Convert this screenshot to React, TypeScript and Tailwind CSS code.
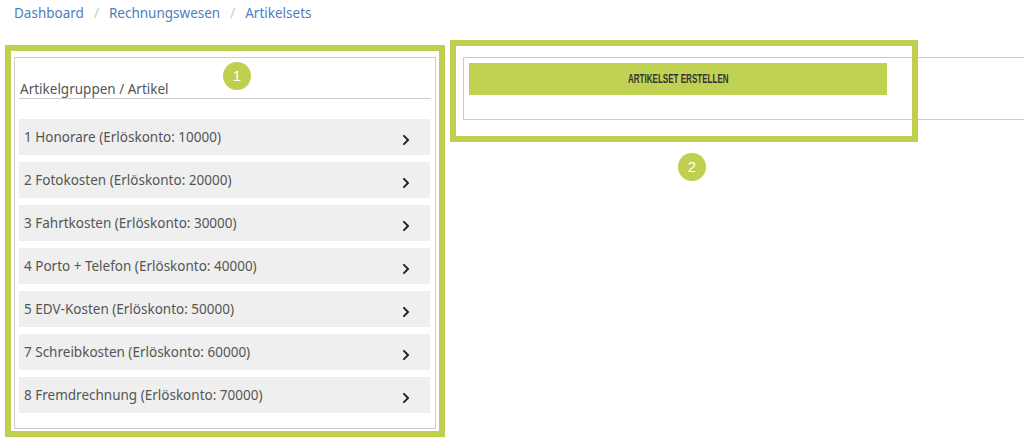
import { FaChevronRight } from 'react-icons/fa';

const groups = [
  '1 Honorare (Erlöskonto: 10000)',
  '2 Fotokosten (Erlöskonto: 20000)',
  '3 Fahrtkosten (Erlöskonto: 30000)',
  '4 Porto + Telefon (Erlöskonto: 40000)',
  '5 EDV-Kosten (Erlöskonto: 50000)',
  '7 Schreibkosten (Erlöskonto: 60000)',
  '8 Fremdrechnung (Erlöskonto: 70000)',
];

function Badge({ n }: { n: string }) {
  return (
    <div className="w-[28px] h-[28px] rounded-full bg-[#c0cf4e] text-white text-[15px] flex items-center justify-center font-['Liberation_Sans',sans-serif]">
      {n}
    </div>
  );
}

export default function App() {
  return (
    <div className="relative w-[1024px] h-[446px] overflow-hidden bg-white font-['Noto_Sans',sans-serif]">
      <nav className="pl-[14px] pt-[2px] h-[24px] flex items-center text-[13.5px] text-[#4f7cbd]">
        <a>Dashboard</a>
        <span className="mx-[10px] text-[#c8c8c8]">/</span>
        <a>Rechnungswesen</a>
        <span className="mx-[10px] text-[#c8c8c8]">/</span>
        <a>Artikelsets</a>
      </nav>

      <div className="flex mt-[21px]">
        {/* Artikelgruppen */}
        <div className="ml-[5px] w-[440px] border-[6px] border-[#c0cf4e] pt-[6px] pb-[2px] px-[3px]">
          <div className="relative h-[372px] border border-[#cccccc] px-[4px]">
            <div className="absolute left-[208px] top-[4px]">
              <Badge n="1" />
            </div>
            <div className="mt-[22px] h-[19px] leading-[18px] border-b border-[#cccccc] text-[13.5px] text-[#555] pl-[1px]">
              Artikelgruppen / Artikel
            </div>
            <ul className="mt-[20px] flex flex-col gap-[7px] mr-[1px]">
              {groups.map((g) => (
                <li
                  key={g}
                  className="h-[36px] bg-[#efefef] flex items-center justify-between pl-[5px] pr-[19px] text-[13.5px] text-[#555]"
                >
                  <span>{g}</span>
                  <FaChevronRight className="w-[10px] h-[12px] text-[#222] mt-[5px]" />
                </li>
              ))}
            </ul>
          </div>
        </div>

        {/* Artikelsets */}
        <div className="relative ml-[18px] mt-[12px] flex-1 -mr-[10px]">
          <div className="h-[63px] border border-[#cccccc] pt-[5px] pl-[5px]">
            <button className="w-[418px] h-[32px] bg-[#c1d152] flex items-center justify-center">
              <span className="inline-block scale-x-[0.62] text-[#333] text-[13px] font-bold font-['Liberation_Sans',sans-serif] whitespace-nowrap">
                ARTIKELSET ERSTELLEN
              </span>
            </button>
          </div>
          <div className="absolute -left-[13px] -top-[17px] w-[468px] h-[102px] border-[6px] border-[#c0cf4e] pointer-events-none" />
          <div className="absolute left-[215px] top-[96px]">
            <Badge n="2" />
          </div>
        </div>
      </div>
    </div>
  );
}
